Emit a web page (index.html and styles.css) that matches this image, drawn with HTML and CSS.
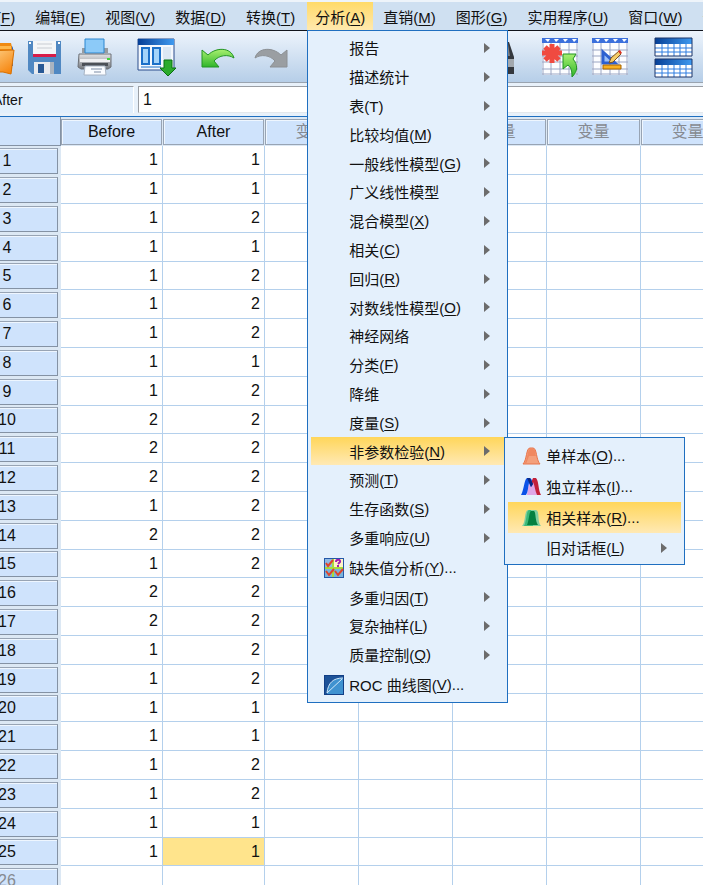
FILE: index.html
```html
<!DOCTYPE html>
<html lang="zh-CN">
<head>
    <meta charset="UTF-8">
    <meta name="viewport" content="width=device-width, initial-scale=1.0">
    <title>数据编辑器</title>
    <link rel="stylesheet" href="styles.css">
</head>
<body>
    <div class="app">
        <nav class="menubar">
            <div class="menu"><button>文件(<u>F</u>)</button></div>
            <div class="menu"><button>编辑(<u>E</u>)</button></div>
            <div class="menu"><button>视图(<u>V</u>)</button></div>
            <div class="menu"><button>数据(<u>D</u>)</button></div>
            <div class="menu"><button>转换(<u>T</u>)</button></div>
            <div class="menu open">
                <button>分析(<u>A</u>)</button>
                <ul class="dropdown">
                    <li class="more"><button>报告</button></li>
                    <li class="more"><button>描述统计</button></li>
                    <li class="more"><button>表(T)</button></li>
                    <li class="more"><button>比较均值(<u>M</u>)</button></li>
                    <li class="more"><button>一般线性模型(<u>G</u>)</button></li>
                    <li class="more"><button>广义线性模型</button></li>
                    <li class="more"><button>混合模型(<u>X</u>)</button></li>
                    <li class="more"><button>相关(<u>C</u>)</button></li>
                    <li class="more"><button>回归(<u>R</u>)</button></li>
                    <li class="more"><button>对数线性模型(<u>O</u>)</button></li>
                    <li class="more"><button>神经网络</button></li>
                    <li class="more"><button>分类(<u>F</u>)</button></li>
                    <li class="more"><button>降维</button></li>
                    <li class="more"><button>度量(<u>S</u>)</button></li>
                    <li class="more active">
                        <button>非参数检验(<u>N</u>)</button>
                        <ul class="dropdown submenu">
                            <li class="has-icon">
                                <button>
                                    <svg viewBox="0 0 20 20"><path d="M2 18C6 14 5 2 9 2h3c4 0 3 12 7 16z" fill="#f4a07c" stroke="#e8744a"/><path d="M3 18C7 14 6 4 9 3h3c3 1 2 4 3 7H8l-3 8z" fill="#f08860"/></svg>
                                    单样本(<u>O</u>)...
                                </button>
                            </li>
                            <li class="has-icon">
                                <button>
                                    <svg viewBox="0 0 20 20"><path d="M6 18C7 12 8 3 11 2c3 1 4 10 5 16z" fill="#dfa6e6"/><path d="M0 18C3 13 3 3 6 1h3c2 1 2 4 3 6l-2 3-2-4c-1 4-1 9-3 12z" fill="#0b52e8"/><path d="M10 6 12 1h3c3 3 2 12 5 17h-4c-2-4-2-9-4-13l-1 4z" fill="#c3203a"/><path d="M6 1h3l3 6-2 3z" fill="#0a2a86"/></svg>
                                    独立样本(<u>I</u>)...
                                </button>
                            </li>
                            <li class="has-icon active">
                                <button>
                                    <svg viewBox="0 0 20 20"><path d="M1 18C5 14 3 3 7 2h8c4 1 1 12 5 16z" fill="#7fcfa0"/><path d="M3 18C6 12 5 3 8 2h2l2 16z" fill="#3cb878"/><path d="M6 17C8 13 8 4 10 3h3c2 1 1 10 4 14z" fill="#058040"/></svg>
                                    相关样本(<u>R</u>)...
                                </button>
                            </li>
                            <li class="more"><button>旧对话框(<u>L</u>)</button></li>
                        </ul>
                    </li>
                    <li class="more"><button>预测(<u>T</u>)</button></li>
                    <li class="more"><button>生存函数(<u>S</u>)</button></li>
                    <li class="more"><button>多重响应(<u>U</u>)</button></li>
                    <li class="has-icon">
                        <button>
                            <svg viewBox="0 0 20 20"><path d="M0 0h20v20H0z" fill="#2458a8"/><path d="M1 1h8v8H1z" fill="#8fb8e4"/><path d="M10 1h9v8h-9z" fill="#fff3c8"/><path d="M1 10h8v9H1zM10 10h9v9h-9z" fill="#78b4dc"/><path d="M9 1v18M1 10h18" stroke="#a8dc3c" stroke-width="2"/><path d="m2 5 2 3 5-6M2 13l3 4 5-6M11 13l3 4 5-6" fill="none" stroke="#e0442c" stroke-width="2"/><path d="M12 4c0-3 5-3 4 0l-2 2M14 7v2" fill="none" stroke="#a01cb0" stroke-width="2"/></svg>
                            缺失值分析(<u>Y</u>)...
                        </button>
                    </li>
                    <li class="more"><button>多重归因(<u>T</u>)</button></li>
                    <li class="more"><button>复杂抽样(<u>L</u>)</button></li>
                    <li class="more"><button>质量控制(<u>Q</u>)</button></li>
                    <li class="has-icon">
                        <button>
                            <svg viewBox="0 0 20 20"><path d="M0 0h20v20H0z" fill="#123f86"/><path d="M1 1h18v18H1z" fill="#3f92d0"/><path d="M1 1h18v2C9 3 4 8 3 19H1z" fill="#1c5298"/><path d="M3 18C4 8 9 3 19 3M3 18 18 4" fill="none" stroke="#cfe8fa"/></svg>
                            ROC 曲线图(<u>V</u>)...
                        </button>
                    </li>
                </ul>
            </div>
            <div class="menu"><button>直销(<u>M</u>)</button></div>
            <div class="menu"><button>图形(<u>G</u>)</button></div>
            <div class="menu"><button>实用程序(<u>U</u>)</button></div>
            <div class="menu"><button>窗口(<u>W</u>)</button></div>
            <div class="menu"><button>帮助</button></div>
        </nav>

        <div class="toolbar">
            <svg class="defs">
                <defs>
                    <linearGradient id="blue"><stop offset="0" stop-color="#063f96"/><stop offset="1" stop-color="#3f9af0"/></linearGradient>
                    <linearGradient id="orange" x2="1" y2="1"><stop offset="0" stop-color="#ffe0a0"/><stop offset="1" stop-color="#f57c00"/></linearGradient>
                    <linearGradient id="green" x2="0" y2="1"><stop offset="0" stop-color="#a8f070"/><stop offset="1" stop-color="#2fb52a"/></linearGradient>
                    <linearGradient id="metal" x2="0" y2="1"><stop offset="0" stop-color="#e4e4e6"/><stop offset="1" stop-color="#74787e"/></linearGradient>
                </defs>
            </svg>
            <div class="group">
                <button aria-label="打开">
                    <svg viewBox="0 0 36 36"><path d="M6 7h29l1 2v18h-4z" fill="#2f62b8"/><path d="M6 4h28l1 4v22H6z" fill="#f08a10"/><path d="M6 7h28v3H6z" fill="#ffb84c"/><path d="m2 12 35-1-3 24-8-2H6z" fill="url(#orange)" stroke="#d87000"/></svg>
                </button>
                <button aria-label="保存">
                    <svg viewBox="0 0 36 36"><path d="M1 2h33v33H5l-4-4z" fill="#5088c2"/><path d="M6 2h23v13H6z" fill="#f4f6f8"/><path d="M10 5h15M10 9h15" stroke="#c8ccd2"/><path d="M6 15h23v3H6z" fill="#d81c48"/><path d="M7 23h20v12H7z" fill="#e8eaee"/><path d="M11 25h6v9h-6z" fill="#285894"/><path d="M23 23h4v12h-4z" fill="#aab4c0"/><path d="M2 3h2v2H2zM31 3h2v2h-2z" fill="#fff"/></svg>
                </button>
                <button aria-label="打印">
                    <svg viewBox="0 0 36 38"><path d="M5 10h26v5H5z" fill="#989ca0"/><path d="M8 1h19v14H8z" fill="#8ccaf8" stroke="#2a86d0"/><path d="M2 16h32v13l-3 2H4l-3-2z" fill="url(#metal)" stroke="#6c7076"/><path d="M3 21h30v3H3z" fill="#f0f0f2"/><path d="M5 25h26v3H5z" fill="#4c5056"/><path d="M30 20h3v2h-3z" fill="#44d43c"/><path d="m8 28-1 9h22l-1-9z" fill="#fafcff" stroke="#a8b4c4"/><path d="M14 31h11M17 34h7" stroke="#7c8ca4"/></svg>
                </button>
            </div>
            <div class="group">
                <button aria-label="调用对话框">
                    <svg viewBox="0 0 36 38"><path d="M-2 1h36v31H-2z" fill="#f4f8fd" stroke="#2a4c8c"/><path d="M-2 1h36v6H-2z" fill="url(#blue)"/><path d="M2 10h7v16H2zM13 10h7v16h-7z" fill="#a4d4fa" stroke="#1c70c8" stroke-width="2"/><path d="M23 9h8v13h-8z" fill="#dce8f4"/><path d="M1 29h20" stroke="#1c70c8"/><path d="M24 22h8v8h4l-8 8-8-8h4z" fill="#2cab2c" stroke="#087010"/></svg>
                </button>
            </div>
            <div class="group">
                <button aria-label="撤消">
                    <svg viewBox="0 0 36 36"><path d="M-1 11v17h17l-5-6c5-6 14-7 20-3C28 8 13 8 5 16z" fill="url(#green)" stroke="#239424"/></svg>
                </button>
                <button aria-label="恢复">
                    <svg viewBox="0 0 36 36"><path d="M34 11v17H17l5-6C17 16 8 15 2 19 5 8 20 8 28 16z" fill="#9a9ea2" stroke="#8c9094"/></svg>
                </button>
            </div>
            <div class="group">
                <button aria-label="转到个案"><svg viewBox="0 0 36 36"><path d="M2 2h32v32H2z" fill="#fff" stroke="#3464c8"/></svg></button>
                <button aria-label="转到变量"><svg viewBox="0 0 36 36"><path d="M2 2h32v32H2z" fill="#fff" stroke="#3464c8"/></svg></button>
                <button aria-label="变量"><svg viewBox="0 0 36 36"><path d="M2 2h32v32H2z" fill="#fff" stroke="#3464c8"/></svg></button>
            </div>
            <div class="group">
                <button aria-label="查找">
                    <svg viewBox="0 0 36 36"><path d="M4 4h7l4 14v17H0V18zM25 3h5l2 6 3 9v17H21V18z" fill="#34383e"/><path d="M26 5h3l2 12h-7z" fill="#7c828a"/><path d="M22 20h13v8H22z" fill="#a2a8ae"/><path d="M15 15h6v10h-6z" fill="#50545a"/></svg>
                </button>
            </div>
            <div class="group">
                <button aria-label="插入个案">
                    <svg viewBox="0 0 36 38"><path d="M0 0h36v37H0z" fill="#fcfdff"/><path d="M0 0h36v5H0z" fill="#3c70dc"/><path d="M3 1h5L6 4zM12 1h5l-3 3zM21 1h5l-3 3zM30 1h5l-3 3z" fill="#fff"/><path d="M1 5v32M9 5v32M18 5v32M27 5v32M35 5v32M0 12h36M0 18h36M0 24h36M0 31h36M0 36h36" stroke="#9aa6c4"/><path d="M10 6v19M3 9l14 13M17 9 3 22M0 15h20" stroke="#f04a40" stroke-width="5"/><path d="M21 16h13l-3 5c5 6 5 12-1 18 0-6-1-10-4-12l-5 4z" fill="url(#green)" stroke="#239424"/></svg>
                </button>
                <button aria-label="插入变量">
                    <svg viewBox="0 0 36 38"><path d="M0 0h36v37H0z" fill="#fcfdff"/><path d="M0 0h36v5H0z" fill="#3c70dc"/><path d="M3 1h5L6 4zM12 1h5l-3 3zM21 1h5l-3 3zM30 1h5l-3 3z" fill="#fff"/><path d="M1 5v32M9 5v32M18 5v32M27 5v32M35 5v32M0 12h36M0 18h36M0 24h36M0 31h36M0 36h36" stroke="#9aa6c4"/><path d="m11 14 12 11H11z" fill="#9cc0f8" stroke="#2c60d0" stroke-width="3"/><path d="m17 25 2-5 8-7 2 3-8 8z" fill="#f4cc68" stroke="#7c5020"/><path d="m26 13 2-1 2 3-2 1z" fill="#e03020"/><path d="M11 27h18v4H11z" fill="#f8b020" stroke="#a86400"/></svg>
                </button>
            </div>
            <div class="group">
                <button aria-label="拆分文件">
                    <svg viewBox="0 0 36 38"><path d="M0 0h37v18H0zM0 21h37v18H0z" fill="#fff"/><path d="M0 0h37v6H0zM0 21h37v6H0z" fill="url(#blue)"/><path d="M7 6v12M13 6v12M19 6v12M25 6v12M31 6v12M7 27v12M13 27v12M19 27v12M25 27v12M31 27v12M0 10h37M0 14h37M0 31h37M0 35h37" stroke="#2c7ce0"/><path d="M0 0h37v18H0zM0 21h37v18H0z" fill="none" stroke="#1c3468"/></svg>
                </button>
            </div>
        </div>

        <div class="editbar">
            <label for="cell">After</label>
            <input type="text" id="cell" value="1">
        </div>

        <div class="sheet">
            <table>
                <thead>
                    <tr>
                        <th class="corner"></th>
                        <th class="data"><span>Before</span></th>
                        <th class="data"><span>After</span></th>
                        <th class="unused"><span>变量</span></th>
                        <th class="unused"><span>变量</span></th>
                        <th class="unused"><span>变量</span></th>
                        <th class="unused"><span>变量</span></th>
                        <th class="unused"><span>变量</span></th>
                    </tr>
                </thead>
                <tbody id="rows"></tbody>
            </table>
        </div>
    </div>

    <script>
        const before = [1, 1, 1, 1, 1, 1, 1, 1, 1, 2, 2, 2, 1, 2, 1, 2, 2, 1, 1, 1, 1, 1, 1, 1, 1];
        const after = [1, 1, 2, 1, 2, 2, 2, 1, 2, 2, 2, 2, 2, 2, 2, 2, 2, 2, 2, 1, 1, 2, 2, 1, 1];

        let html = "";
        // one blank row after the data
        for (let i = 0; i <= before.length; i++) {
            const blank = i >= before.length;
            html += `<tr>
                <th class="${blank ? "unused" : ""}"><span>${i + 1}</span></th>
                <td>${blank ? "" : before[i]}</td>
                <td class="${i === 24 ? "selected" : ""}">${blank ? "" : after[i]}</td>
                <td></td><td></td><td></td><td></td><td></td>
            </tr>`;
        }
        document.getElementById("rows").innerHTML = html;
    </script>
</body>
</html>
```
FILE: styles.css
```css
* {
    box-sizing: border-box;
}
body {
    margin: 0;
    overflow: hidden;
    font-family: "Liberation Sans", "Noto Sans CJK SC", sans-serif;
    font-size: 15px;
    color: #111;
    background-color: #fff;
}
button, input {
    font: inherit;
    color: inherit;
}
button {
    padding: 0;
    border: none;
    background: none;
    white-space: nowrap;
}
u {
    text-underline-offset: 2px;
}

/* the window runs off the left edge of the screen */
.app {
    display: flex;
    flex-direction: column;
    height: 100vh;
    margin-left: -44px;
    overflow: hidden;
}

/* menu bar */
.menubar {
    display: flex;
    flex: none;
    height: 31px;
    border-top: 2px solid #eef4fa;
    border-bottom: 1px solid #10141c;
    background-color: #cfe0f1;
}
.menu {
    position: relative;
    flex: none;
}
.menu > button {
    height: 28px;
    padding: 0 10px;
}
.menu.open {
    margin-left: 2px;
    background: linear-gradient(#ffda68, #ffe9ae);
}
.menu.open > button {
    padding: 0 8px;
}
.dropdown {
    position: absolute;
    z-index: 10;
    top: 100%;
    left: 0;
    width: 201px;
    margin: 0;
    padding: 2px 3px;
    list-style: none;
    border: 1px solid #1f6fc0;
    background-color: #e4f0fc;
}
.dropdown li {
    position: relative;
    height: 29px;
}
.dropdown li:nth-child(5n) {
    height: 28px;
}
.dropdown li.has-icon {
    height: 31px;
}
.dropdown li > button {
    display: flex;
    align-items: center;
    width: 100%;
    height: 100%;
    padding-left: 38px;
}
.dropdown li.has-icon > button {
    padding-left: 13px;
}
.dropdown svg {
    width: 20px;
    height: 20px;
    margin-right: 5px;
}
.dropdown li.active > button {
    background: linear-gradient(#ffd65a, #ffe9b4);
}
.dropdown li.more > button::after {
    content: "";
    margin-left: auto;
    margin-right: 14px;
    border-left: 6px solid #6c6c6c;
    border-top: 5px solid transparent;
    border-bottom: 5px solid transparent;
}
.dropdown.submenu {
    top: 0;
    left: 100%;
    width: 181px;
}

/* toolbar */
.toolbar {
    display: flex;
    flex: none;
    align-items: center;
    gap: 27px;
    height: 52px;
    padding-left: 21px;
    border-bottom: 1px solid #9aa4b0;
    background: linear-gradient(#edf4fc, #b6cee8);
}
.defs {
    position: absolute;
    width: 0;
    height: 0;
}
.group {
    display: flex;
    flex: none;
    align-items: center;
    gap: 14px;
}
.toolbar button svg {
    display: block;
    width: 36px;
    height: 38px;
    overflow: visible;
}

/* cell editor */
.editbar {
    display: flex;
    flex: none;
    gap: 4px;
    height: 34px;
    padding: 3px 0;
    border-bottom: 1px solid #1f6fc0;
    background-color: #e8f1fa;
}
.editbar label {
    width: 178px;
    padding-left: 37px;
    border-top: 1px solid #9a9ea4;
    border-right: 1px solid #fff;
    background-color: #e2effc;
    font-size: 14px;
    line-height: 27px;
}
.editbar input {
    flex: 1;
    min-width: 0;
    padding: 0 4px;
    border: 1px solid #9a9ea4;
    border-right: none;
    border-bottom-color: #e4e8ec;
    background-color: #fff;
    font-size: 16px;
}

/* data sheet */
.sheet {
    flex: 1;
    overflow: hidden;
    background-color: #fff;
}
table {
    width: 779px;
    table-layout: fixed;
    border-collapse: separate;
    border-spacing: 0;
    font-size: 16px;
}
tr {
    height: 29px;
}
tbody tr:nth-child(5n) {
    height: 28px;
}
th, td {
    padding: 0;
    line-height: 24px;
}
th {
    font-weight: normal;
    background-color: #dce8f4;
}
th span {
    display: block;
    margin: 0 1px 0 0;
    border: 1px solid #98a4b4;
    background-color: #cfe3fc;
    box-shadow: inset 1px 1px #eef6ff;
}
tbody th span {
    margin-right: 3px;
    border-right-color: #8492a4;
    border-bottom-color: #8492a4;
}
.corner {
    width: 105px;
    border-right: 1px solid #8492a4;
    border-bottom: 1px solid #8492a4;
    background-color: #cfe3fc;
}
.data {
    width: 102px;
}
.unused {
    color: #868a90;
}
thead .unused {
    width: 94px;
}
td {
    padding-right: 4px;
    border-right: 1px solid #b4d0ec;
    border-bottom: 1px solid #b4d0ec;
    text-align: right;
}
.selected {
    background-color: #ffe48c;
}
```
